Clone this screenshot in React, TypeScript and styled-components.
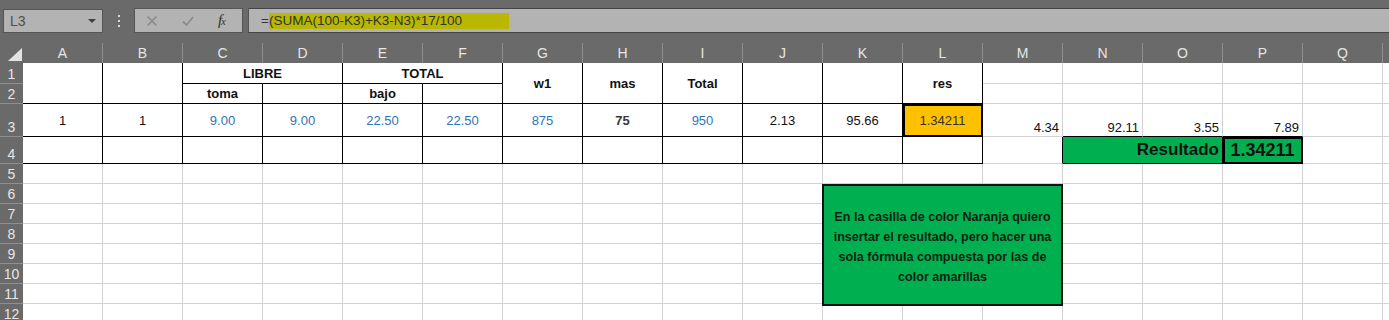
import styled, { createGlobalStyle } from "styled-components";

const GlobalStyle = createGlobalStyle`
  html, body {
    margin: 0;
    padding: 0;
    background: #fff;
    overflow: hidden;
  }
  body {
    font-family: "Liberation Sans", Arial, sans-serif;
  }
`;

const Window = styled.div`
  position: relative;
  width: 1389px;
  height: 320px;
  overflow: hidden;
  background: #6a6a6a;
`;

const Toolbar = styled.div`
  height: 43px;
  box-sizing: border-box;
  padding: 8px 0 0 3px;
  display: flex;
  align-items: flex-start;
`;

const NameBox = styled.div`
  margin-top: 1px;
  width: 100px;
  height: 24px;
  box-sizing: border-box;
  background: #b3b3b3;
  border: 1px solid #555;
  display: flex;
  align-items: center;
  justify-content: space-between;
  padding: 0 6px 0 6px;
  font-size: 14px;
  color: #4f4f4f;

  .arrow {
    width: 0;
    height: 0;
    border-left: 4px solid transparent;
    border-right: 4px solid transparent;
    border-top: 4px solid #3f3f3f;
  }
`;

const Dots = styled.div`
  width: 31px;
  height: 25px;
  display: flex;
  flex-direction: column;
  align-items: center;
  justify-content: center;
  gap: 3px;

  span {
    width: 2px;
    height: 2px;
    background: #d8d8d8;
  }
`;

const ButtonGroup = styled.div`
  width: 109px;
  height: 25px;
  box-sizing: border-box;
  background: #b3b3b3;
  border: 1px solid #555;
  display: flex;
  align-items: center;
  padding-left: 11px;
  gap: 24px;

  .fx {
    font-family: "Liberation Serif", "Times New Roman", serif;
    font-style: italic;
    font-size: 15px;
    color: #2e2e2e;
    letter-spacing: -1px;
    sub {
      font-size: 10px;
      vertical-align: baseline;
    }
  }
`;

const FormulaBar = styled.div`
  margin-left: 5px;
  flex: 1;
  height: 25px;
  box-sizing: border-box;
  background: #b3b3b3;
  border-top: 1px solid #444;
  border-bottom: 1px solid #444;
  border-left: 1px solid #555;
  display: flex;
  align-items: center;
  padding-left: 12px;
  font-size: 13.5px;
  color: #333;

  .hl {
    display: inline-block;
    width: 240px;
    height: 16px;
    line-height: 16px;
    background: #b9b700;
  }
`;

const Sheet = styled.div`
  display: grid;
  grid-template-columns: 23px repeat(18, 80px);
  grid-template-rows: 20px 21px 20px 33px 27px repeat(8, 20px);
  background: #fff;
`;

const Corner = styled.div`
  background: #6a6a6a;
  display: flex;
  align-items: flex-end;
  justify-content: flex-end;
  padding: 0 1px 2px 0;
`;

const ColHead = styled.div`
  background: #6a6a6a;
  border-right: 1px solid #8e8e8e;
  color: #e6e6e6;
  font-size: 14px;
  display: flex;
  align-items: center;
  justify-content: center;
`;

const RowHead = styled.div<{ $row: number }>`
  grid-column: 1;
  grid-row: ${(p) => p.$row + 1};
  background: #6a6a6a;
  border-bottom: 1px solid #8e8e8e;
  color: #e6e6e6;
  font-size: 14px;
  display: flex;
  align-items: flex-end;
  justify-content: center;
  padding-bottom: 1px;
  box-sizing: border-box;
`;

type Line = "g" | "b";

const Cell = styled.div<{
  $col: number;
  $row: number;
  $cs: number;
  $rs: number;
  $right: Line;
  $bottom: Line;
  $align: "center" | "flex-end";
  $valign: "center" | "flex-end";
  $color: string;
  $bg: string;
  $bold: boolean;
  $size: number;
  $thick: boolean;
}>`
  grid-column: ${(p) => p.$col + 1} / span ${(p) => p.$cs};
  grid-row: ${(p) => p.$row + 1} / span ${(p) => p.$rs};
  box-sizing: border-box;
  border-right: 1px solid ${(p) => (p.$right === "b" ? "#000" : "#d2d2d2")};
  border-bottom: 1px solid ${(p) => (p.$bottom === "b" ? "#000" : "#d2d2d2")};
  background: ${(p) => p.$bg};
  color: ${(p) => p.$color};
  font-weight: ${(p) => (p.$bold ? 700 : 400)};
  font-size: ${(p) => p.$size}px;
  display: flex;
  justify-content: ${(p) => p.$align};
  align-items: ${(p) => p.$valign};
  padding: ${(p) => (p.$valign === "flex-end" ? "0 3px 1px 3px" : "0 3px")};
  white-space: nowrap;
  outline: ${(p) => (p.$thick ? "2px solid #000" : "none")};
  outline-offset: -2px;
`;

const Note = styled.div`
  position: absolute;
  left: 822px;
  top: 184px;
  width: 241px;
  height: 122px;
  box-sizing: border-box;
  border: 2px solid #111;
  background: #00b050;
  display: flex;
  align-items: center;
  justify-content: center;
  text-align: center;
  font-weight: 700;
  font-size: 12.6px;
  line-height: 20px;
  color: #0f1f0f;
  padding-top: 3px;
`;

type Def = {
  c: number;
  r: number;
  cs?: number;
  rs?: number;
  t?: string;
  right?: Line;
  bottom?: Line;
  align?: "center" | "flex-end";
  valign?: "center" | "flex-end";
  color?: string;
  bg?: string;
  bold?: boolean;
  size?: number;
  thick?: boolean;
};

const BLUE = "#2f75b5";
const GREEN = "#00b050";
const B: { right: Line; bottom: Line } = { right: "b", bottom: "b" };

const defs: Def[] = [
  { c: 1, r: 1, rs: 2, ...B },
  { c: 2, r: 1, rs: 2, ...B },
  { c: 3, r: 1, cs: 2, t: "LIBRE", bold: true, ...B },
  { c: 5, r: 1, cs: 2, t: "TOTAL", bold: true, ...B },
  { c: 7, r: 1, rs: 2, t: "w1", bold: true, ...B },
  { c: 8, r: 1, rs: 2, t: "mas", bold: true, ...B },
  { c: 9, r: 1, rs: 2, t: "Total", bold: true, ...B },
  { c: 10, r: 1, rs: 2, ...B },
  { c: 11, r: 1, rs: 2, ...B },
  { c: 12, r: 1, rs: 2, t: "res", bold: true, ...B },
  { c: 3, r: 2, t: "toma", bold: true, ...B },
  { c: 4, r: 2, ...B },
  { c: 5, r: 2, t: "bajo", bold: true, ...B },
  { c: 6, r: 2, ...B },

  { c: 1, r: 3, t: "1", ...B },
  { c: 2, r: 3, t: "1", ...B },
  { c: 3, r: 3, t: "9.00", color: BLUE, ...B },
  { c: 4, r: 3, t: "9.00", color: BLUE, ...B },
  { c: 5, r: 3, t: "22.50", color: BLUE, ...B },
  { c: 6, r: 3, t: "22.50", color: BLUE, ...B },
  { c: 7, r: 3, t: "875", color: BLUE, ...B },
  { c: 8, r: 3, t: "75", bold: true, color: "#3a3a3a", ...B },
  { c: 9, r: 3, t: "950", color: BLUE, ...B },
  { c: 10, r: 3, t: "2.13", ...B },
  { c: 11, r: 3, t: "95.66", ...B },
  { c: 12, r: 3, t: "1.34211", bg: "#ffc000", color: "#333", thick: true, ...B },
  { c: 13, r: 3, t: "4.34", align: "flex-end", valign: "flex-end" },
  { c: 14, r: 3, t: "92.11", align: "flex-end", valign: "flex-end", bottom: "b" },
  { c: 15, r: 3, t: "3.55", align: "flex-end", valign: "flex-end", bottom: "b" },
  { c: 16, r: 3, t: "7.89", align: "flex-end", valign: "flex-end", bottom: "b" },

  ...Array.from({ length: 12 }, (_, i): Def => ({ c: i + 1, r: 4, ...B })),
  { c: 13, r: 4, right: "b" },
  { c: 14, r: 4, cs: 2, t: "Resultado", bold: true, size: 17, align: "flex-end", bg: GREEN, ...B },
  { c: 16, r: 4, t: "1.34211", bold: true, size: 18, bg: GREEN, thick: true, ...B },
];

// the last column only peeks in at the right edge, so its letter stays out of view
const LETTERS = "ABCDEFGHIJKLMNOPQ".split("").concat("");
const ROWS = 12;

function buildCells(): Def[] {
  const taken = new Set<string>();
  const all: Def[] = [];
  defs.forEach((d) => {
    for (let i = 0; i < (d.cs ?? 1); i++)
      for (let j = 0; j < (d.rs ?? 1); j++) taken.add(`${d.c + i}-${d.r + j}`);
    all.push(d);
  });
  for (let r = 1; r <= ROWS; r++)
    for (let c = 1; c <= LETTERS.length; c++)
      if (!taken.has(`${c}-${r}`)) all.push({ c, r });
  return all;
}

const XIcon = () => (
  <svg width="12" height="12" viewBox="0 0 12 12">
    <path d="M1.5 1.5 L10.5 10.5 M10.5 1.5 L1.5 10.5" stroke="#8a8a8a" strokeWidth="1.6" fill="none" />
  </svg>
);

const CheckIcon = () => (
  <svg width="12" height="12" viewBox="0 0 12 12">
    <path d="M1 6.5 L4.5 10 L11 2" stroke="#8a8a8a" strokeWidth="1.8" fill="none" />
  </svg>
);

export default function App() {
  const cells = buildCells();
  return (
    <>
      <GlobalStyle />
      <Window>
        <Toolbar>
          <NameBox>
            L3
            <span className="arrow" />
          </NameBox>
          <Dots>
            <span />
            <span />
            <span />
          </Dots>
          <ButtonGroup>
            <XIcon />
            <CheckIcon />
            <span className="fx">
              f<sub>x</sub>
            </span>
          </ButtonGroup>
          <FormulaBar>
            =<span className="hl">(SUMA(100-K3)+K3-N3)*17/100</span>
          </FormulaBar>
        </Toolbar>

        <Sheet>
          <Corner>
            <svg width="14" height="13" viewBox="0 0 14 13">
              <polygon points="14,0 14,13 0,13" fill="#e4e4e4" />
            </svg>
          </Corner>
          {LETTERS.map((l, i) => (
            <ColHead key={i}>{l}</ColHead>
          ))}
          {Array.from({ length: ROWS }, (_, i) => (
            <RowHead key={i} $row={i + 1}>
              {i + 1}
            </RowHead>
          ))}
          {cells.map((d) => (
            <Cell
              key={`${d.c}-${d.r}`}
              $col={d.c}
              $row={d.r}
              $cs={d.cs ?? 1}
              $rs={d.rs ?? 1}
              $right={d.right ?? "g"}
              $bottom={d.bottom ?? "g"}
              $align={d.align ?? "center"}
              $valign={d.valign ?? "center"}
              $color={d.color ?? "#111"}
              $bg={d.bg ?? "#fff"}
              $bold={!!d.bold}
              $size={d.size ?? 13}
              $thick={!!d.thick}
            >
              {d.t}
            </Cell>
          ))}
        </Sheet>

        <Note>
          En la casilla de color Naranja quiero
          <br />
          insertar el resultado, pero hacer una
          <br />
          sola fórmula compuesta por las de
          <br />
          color amarillas
        </Note>
      </Window>
    </>
  );
}
